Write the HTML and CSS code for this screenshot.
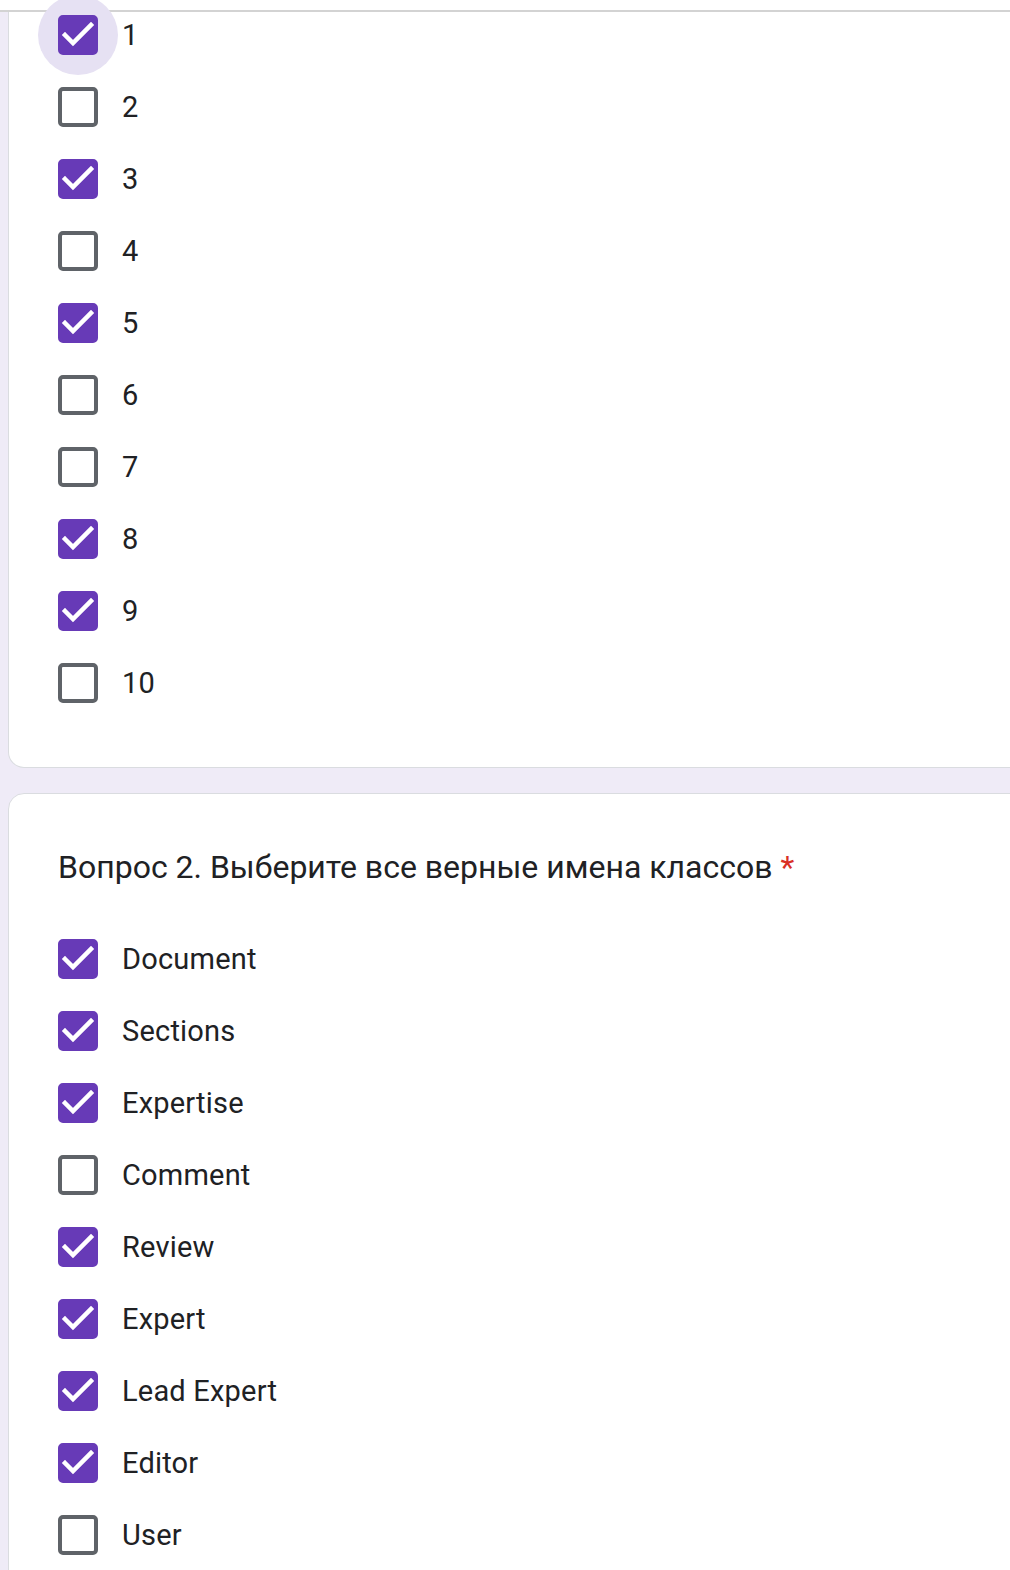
FILE: index.html
```html
<!DOCTYPE html>
<html lang="ru">
<head>
<meta charset="utf-8">
<title>Form</title>
<link rel="stylesheet" href="styles.css">
</head>
<body>
<div class="topbar"></div>
<main class="page">
  <section class="card card-first">
    <ul class="options">
      <li class="option checked"><span class="ripple"><span class="box"><svg viewBox="0 0 40 40"><polyline points="7,20 15,28 33,10"/></svg></span></span><span class="label">1</span></li>
      <li class="option"><span class="box"></span><span class="label">2</span></li>
      <li class="option checked"><span class="box"><svg viewBox="0 0 40 40"><polyline points="7,20 15,28 33,10"/></svg></span><span class="label">3</span></li>
      <li class="option"><span class="box"></span><span class="label">4</span></li>
      <li class="option checked"><span class="box"><svg viewBox="0 0 40 40"><polyline points="7,20 15,28 33,10"/></svg></span><span class="label">5</span></li>
      <li class="option"><span class="box"></span><span class="label">6</span></li>
      <li class="option"><span class="box"></span><span class="label">7</span></li>
      <li class="option checked"><span class="box"><svg viewBox="0 0 40 40"><polyline points="7,20 15,28 33,10"/></svg></span><span class="label">8</span></li>
      <li class="option checked"><span class="box"><svg viewBox="0 0 40 40"><polyline points="7,20 15,28 33,10"/></svg></span><span class="label">9</span></li>
      <li class="option"><span class="box"></span><span class="label">10</span></li>
    </ul>
  </section>
  <section class="card card-second">
    <h2 class="question">Вопрос 2. Выберите все верные имена классов <span class="req">*</span></h2>
    <ul class="options">
      <li class="option checked"><span class="box"><svg viewBox="0 0 40 40"><polyline points="7,20 15,28 33,10"/></svg></span><span class="label">Document</span></li>
      <li class="option checked"><span class="box"><svg viewBox="0 0 40 40"><polyline points="7,20 15,28 33,10"/></svg></span><span class="label">Sections</span></li>
      <li class="option checked"><span class="box"><svg viewBox="0 0 40 40"><polyline points="7,20 15,28 33,10"/></svg></span><span class="label">Expertise</span></li>
      <li class="option"><span class="box"></span><span class="label">Comment</span></li>
      <li class="option checked"><span class="box"><svg viewBox="0 0 40 40"><polyline points="7,20 15,28 33,10"/></svg></span><span class="label">Review</span></li>
      <li class="option checked"><span class="box"><svg viewBox="0 0 40 40"><polyline points="7,20 15,28 33,10"/></svg></span><span class="label">Expert</span></li>
      <li class="option checked"><span class="box"><svg viewBox="0 0 40 40"><polyline points="7,20 15,28 33,10"/></svg></span><span class="label">Lead Expert</span></li>
      <li class="option checked"><span class="box"><svg viewBox="0 0 40 40"><polyline points="7,20 15,28 33,10"/></svg></span><span class="label">Editor</span></li>
      <li class="option"><span class="box"></span><span class="label">User</span></li>
    </ul>
  </section>
</main>
</body>
</html>
```

FILE: styles.css
```css
html, body {
  margin: 0;
  padding: 0;
  overflow: hidden;
}
body {
  background: #efebf7;
  font-family: Roboto, "Noto Sans", Arial, sans-serif;
  color: #202124;
}
.topbar {
  height: 10px;
  background: #ffffff;
  border-bottom: 2px solid #d3d3d3;
}
.page {
  display: flex;
  flex-direction: column;
  gap: 25px;
  padding-left: 8px;
  margin-right: -40px;
}
.card {
  background: #ffffff;
  border: 1px solid #dadce0;
  border-radius: 16px;
  padding-left: 49px;
}
.card-first {
  border-top: none;
  border-radius: 0 0 16px 16px;
  padding-top: 3px;
  padding-bottom: 64px;
}
.card-second {
  padding-top: 49px;
  padding-bottom: 40px;
}
.question {
  margin: 0 0 48px 0;
  font-size: 32px;
  line-height: 48px;
  font-weight: 400;
  color: #202124;
  letter-spacing: 0;
}
.req {
  color: #d93025;
}
.options {
  list-style: none;
  margin: 0;
  padding: 0;
  display: flex;
  flex-direction: column;
  gap: 32px;
}
.option {
  display: flex;
  align-items: center;
  gap: 24px;
  height: 40px;
}
.ripple {
  flex: none;
  width: 80px;
  height: 80px;
  margin: -20px;
  border-radius: 50%;
  background: #e6e1f3;
  display: flex;
  align-items: center;
  justify-content: center;
}
.box {
  position: relative;
  box-sizing: border-box;
  width: 40px;
  height: 40px;
  flex: none;
  border: 4px solid #5f6368;
  border-radius: 5px;
  background: #ffffff;
}
.checked .box {
  border-color: #673ab7;
  background: #673ab7;
}
.box svg {
  position: absolute;
  left: -4px;
  top: -4px;
  width: 40px;
  height: 40px;
}
.box polyline {
  fill: none;
  stroke: #ffffff;
  stroke-width: 4.5;
  stroke-linecap: square;
}
.label {
  font-size: 29px;
  line-height: 40px;
  letter-spacing: 0.2px;
  color: #202124;
}
```
